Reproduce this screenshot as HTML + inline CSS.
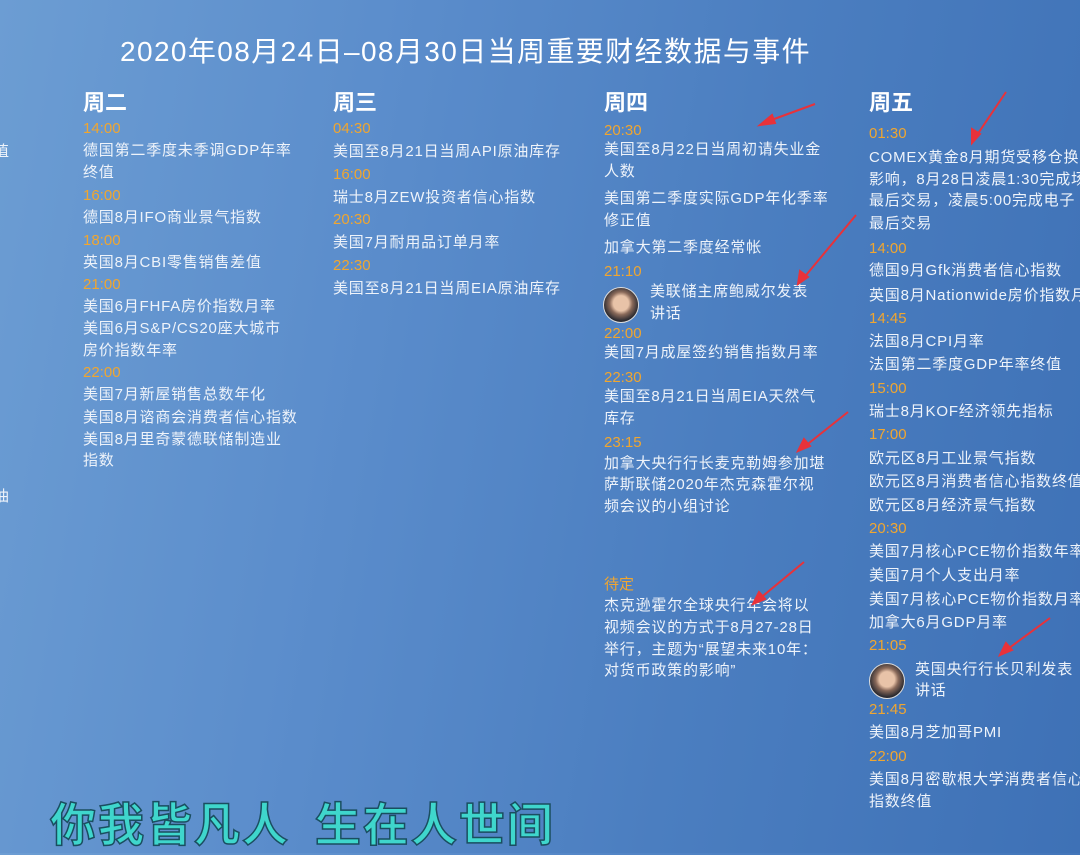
<!DOCTYPE html>
<html><head><meta charset="utf-8"><style>
html,body{margin:0;padding:0}
body{width:1080px;height:853px;overflow:hidden;position:relative;
background:linear-gradient(100deg,#6c9dd3 0%,#5a8ccb 35%,#4b7ec0 65%,#3e71b6 100%);
font-family:"Liberation Sans","Noto Sans CJK SC",sans-serif;}
.t{position:absolute;white-space:nowrap;font-size:15px;line-height:22px;color:#eef3fa;letter-spacing:0.8px}
.o{color:#f0a630;font-size:15px;letter-spacing:0}
.h{position:absolute;font-size:22px;font-weight:bold;color:#fff;line-height:26px}
.title{position:absolute;left:120px;top:34px;font-size:28px;color:#fff;white-space:nowrap;line-height:36px;letter-spacing:1.4px;font-family:"Liberation Sans","Noto Sans CJK SC",sans-serif}
.av{position:absolute;width:34px;height:34px;border-radius:50%;background:radial-gradient(circle at 50% 45%,#e8c3a8 0 30%,#8a6a5a 45%,#2a2a30 70%);border:1px solid #ddd}
.sub{position:absolute;left:50px;top:792px;font-size:46px;font-weight:bold;white-space:nowrap;color:#3fd6cc;-webkit-text-stroke:1.5px #1a4e60;letter-spacing:2px;font-family:"Noto Sans CJK SC",sans-serif;line-height:60px}
</style></head><body>
<div class="title">2020年08月24日–08月30日当周重要财经数据与事件</div>
<div class="t" style="left:-6px;top:141px">值</div>
<div class="t" style="left:-6px;top:486px">油</div>

<div class="h" style="left:83px;top:90px">周二</div>
<div class="t o" style="left:83px;top:118px">14:00</div>
<div class="t" style="left:83px;top:140px">德国第二季度未季调GDP年率</div>
<div class="t" style="left:83px;top:162px">终值</div>
<div class="t o" style="left:83px;top:185px">16:00</div>
<div class="t" style="left:83px;top:207px">德国8月IFO商业景气指数</div>
<div class="t o" style="left:83px;top:230px">18:00</div>
<div class="t" style="left:83px;top:252px">英国8月CBI零售销售差值</div>
<div class="t o" style="left:83px;top:274px">21:00</div>
<div class="t" style="left:83px;top:296px">美国6月FHFA房价指数月率</div>
<div class="t" style="left:83px;top:318px">美国6月S&amp;P/CS20座大城市</div>
<div class="t" style="left:83px;top:340px">房价指数年率</div>
<div class="t o" style="left:83px;top:362px">22:00</div>
<div class="t" style="left:83px;top:384px">美国7月新屋销售总数年化</div>
<div class="t" style="left:83px;top:407px">美国8月谘商会消费者信心指数</div>
<div class="t" style="left:83px;top:429px">美国8月里奇蒙德联储制造业</div>
<div class="t" style="left:83px;top:450px">指数</div>

<div class="h" style="left:333px;top:90px">周三</div>
<div class="t o" style="left:333px;top:118px">04:30</div>
<div class="t" style="left:333px;top:141px">美国至8月21日当周API原油库存</div>
<div class="t o" style="left:333px;top:164px">16:00</div>
<div class="t" style="left:333px;top:187px">瑞士8月ZEW投资者信心指数</div>
<div class="t o" style="left:333px;top:209px">20:30</div>
<div class="t" style="left:333px;top:232px">美国7月耐用品订单月率</div>
<div class="t o" style="left:333px;top:255px">22:30</div>
<div class="t" style="left:333px;top:278px">美国至8月21日当周EIA原油库存</div>

<div class="h" style="left:604px;top:90px">周四</div>
<div class="t o" style="left:604px;top:120px">20:30</div>
<div class="t" style="left:604px;top:139px">美国至8月22日当周初请失业金</div>
<div class="t" style="left:604px;top:161px">人数</div>
<div class="t" style="left:604px;top:188px">美国第二季度实际GDP年化季率</div>
<div class="t" style="left:604px;top:210px">修正值</div>
<div class="t" style="left:604px;top:237px">加拿大第二季度经常帐</div>
<div class="t o" style="left:604px;top:261px">21:10</div>
<div class="av" style="left:603px;top:287px"></div>
<div class="t" style="left:650px;top:281px">美联储主席鲍威尔发表</div>
<div class="t" style="left:650px;top:303px">讲话</div>
<div class="t o" style="left:604px;top:323px">22:00</div>
<div class="t" style="left:604px;top:342px">美国7月成屋签约销售指数月率</div>
<div class="t o" style="left:604px;top:367px">22:30</div>
<div class="t" style="left:604px;top:386px">美国至8月21日当周EIA天然气</div>
<div class="t" style="left:604px;top:408px">库存</div>
<div class="t o" style="left:604px;top:432px">23:15</div>
<div class="t" style="left:604px;top:453px">加拿大央行行长麦克勒姆参加堪</div>
<div class="t" style="left:604px;top:474px">萨斯联储2020年杰克森霍尔视</div>
<div class="t" style="left:604px;top:496px">频会议的小组讨论</div>
<div class="t o" style="left:604px;top:574px">待定</div>
<div class="t" style="left:604px;top:595px">杰克逊霍尔全球央行年会将以</div>
<div class="t" style="left:604px;top:617px">视频会议的方式于8月27-28日</div>
<div class="t" style="left:604px;top:639px">举行，主题为“展望未来10年：</div>
<div class="t" style="left:604px;top:660px">对货币政策的影响”</div>

<div class="h" style="left:869px;top:90px">周五</div>
<div class="t o" style="left:869px;top:123px">01:30</div>
<div class="t" style="left:869px;top:147px">COMEX黄金8月期货受移仓换</div>
<div class="t" style="left:869px;top:169px">影响，8月28日凌晨1:30完成场</div>
<div class="t" style="left:869px;top:190px">最后交易，凌晨5:00完成电子</div>
<div class="t" style="left:869px;top:213px">最后交易</div>
<div class="t o" style="left:869px;top:238px">14:00</div>
<div class="t" style="left:869px;top:260px">德国9月Gfk消费者信心指数</div>
<div class="t" style="left:869px;top:285px">英国8月Nationwide房价指数月率</div>
<div class="t o" style="left:869px;top:308px">14:45</div>
<div class="t" style="left:869px;top:331px">法国8月CPI月率</div>
<div class="t" style="left:869px;top:354px">法国第二季度GDP年率终值</div>
<div class="t o" style="left:869px;top:378px">15:00</div>
<div class="t" style="left:869px;top:401px">瑞士8月KOF经济领先指标</div>
<div class="t o" style="left:869px;top:424px">17:00</div>
<div class="t" style="left:869px;top:448px">欧元区8月工业景气指数</div>
<div class="t" style="left:869px;top:471px">欧元区8月消费者信心指数终值</div>
<div class="t" style="left:869px;top:495px">欧元区8月经济景气指数</div>
<div class="t o" style="left:869px;top:518px">20:30</div>
<div class="t" style="left:869px;top:541px">美国7月核心PCE物价指数年率</div>
<div class="t" style="left:869px;top:565px">美国7月个人支出月率</div>
<div class="t" style="left:869px;top:589px">美国7月核心PCE物价指数月率</div>
<div class="t" style="left:869px;top:612px">加拿大6月GDP月率</div>
<div class="t o" style="left:869px;top:635px">21:05</div>
<div class="av" style="left:869px;top:663px"></div>
<div class="t" style="left:915px;top:659px">英国央行行长贝利发表</div>
<div class="t" style="left:915px;top:680px">讲话</div>
<div class="t o" style="left:869px;top:699px">21:45</div>
<div class="t" style="left:869px;top:722px">美国8月芝加哥PMI</div>
<div class="t o" style="left:869px;top:746px">22:00</div>
<div class="t" style="left:869px;top:769px">美国8月密歇根大学消费者信心</div>
<div class="t" style="left:869px;top:791px">指数终值</div>

<svg style="position:absolute;left:0;top:0" width="1080" height="853">
<g stroke="#e8323a" stroke-width="2" fill="#e8323a">
<line x1="815" y1="104" x2="766" y2="122"/><polygon points="760,125 772,115 775,123"/>
<line x1="1006" y1="92" x2="975" y2="138"/><polygon points="972,143 972,129 980,134"/>
<line x1="856" y1="215" x2="802" y2="280"/><polygon points="798,284 800,271 808,277"/>
<line x1="848" y1="412" x2="804" y2="447"/><polygon points="798,451 804,439 810,446"/>
<line x1="804" y1="562" x2="758" y2="600"/><polygon points="753,604 759,592 765,599"/>
<line x1="1050" y1="618" x2="1005" y2="651"/><polygon points="1000,655 1006,643 1012,650"/>
</g></svg>

<div class="sub">你我皆凡人&nbsp;&nbsp;生在人世间</div>
</body></html>
